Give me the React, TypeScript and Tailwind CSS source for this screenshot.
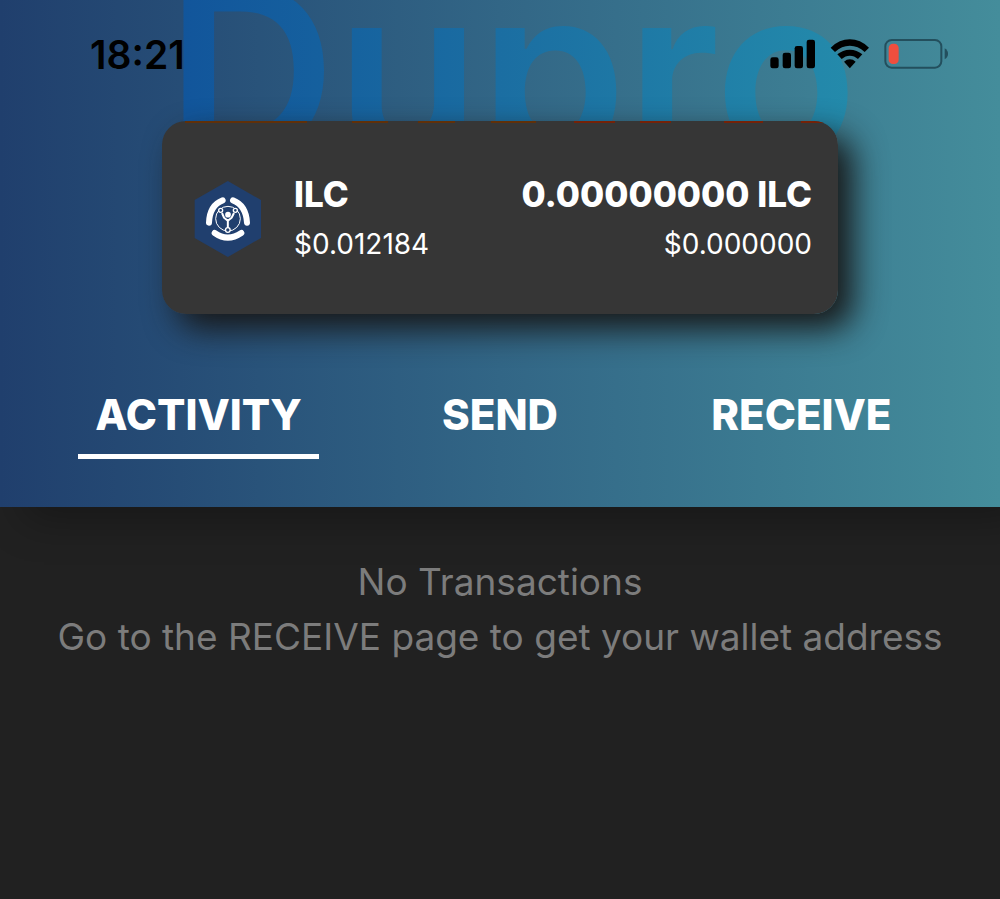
import { useState } from "react";

const tabs = ["ACTIVITY", "SEND", "RECEIVE"];

function SignalIcon() {
  return (
    <svg viewBox="60 58 138 90" className="h-[30px] w-[46px]" aria-hidden="true">
      <rect x="61" y="113" width="25" height="33" rx="7" />
      <rect x="98" y="99" width="25" height="47" rx="7" />
      <rect x="134" y="79" width="25" height="67" rx="7" />
      <rect x="170" y="60" width="25" height="86" rx="7" />
    </svg>
  );
}

function WifiIcon() {
  return (
    <svg viewBox="240 58 120 90" className="h-[30px] w-10" aria-hidden="true">
      <path d="M242 84Q268 59 299.500 59Q331 59 357 84L344 97Q324 78 299.500 78Q275 78 255 97Z" />
      <path d="M262 104Q278 90 299.500 90Q321 90 337 104L324 118Q313 108 299.500 108Q286 108 275 118Z" />
      <path d="M282 126Q290 119 299.500 119Q309 119 317 126L299.500 146Z" />
    </svg>
  );
}

function BatteryIcon() {
  return (
    <svg viewBox="404 58 195 90" className="h-[30px] w-[65px]" aria-hidden="true">
      <rect x="408" y="61" width="168" height="83" rx="19" fill="none" stroke="#234f5d" strokeWidth="6" />
      <rect x="418" y="72" width="30" height="61" rx="13" fill="#f04e3e" />
      <path d="M586 86Q596 92 596 102.500Q596 113 586 119Z" fill="#234f5d" />
    </svg>
  );
}

function CoinLogo() {
  return (
    <svg viewBox="43 48 204 228" className="h-[76px] w-[68px] shrink-0" role="img" aria-label="ILC logo">
      <path d="M144.500 48L244 105V219L144.500 276L45 219V105Z" fill="#203f6e" />
      <g fill="none" stroke="#fff">
        <g strokeWidth="18">
          <path d="M129 106Q90 121 88 173" strokeLinecap="round" />
          <path d="M160 106Q199 121 202 173" strokeLinecap="round" />
          <path d="M105 204Q144 232 185 204" strokeLinecap="round" />
        </g>
        <circle cx="145" cy="161" r="37" strokeWidth="3" />
        <path d="M127 144L133 158L144.500 167L156 158L163 144M144.500 162V188" strokeWidth="6" />
        <g fill="#203f6e" strokeWidth="4">
          <circle cx="123" cy="136" r="6" />
          <circle cx="167" cy="136" r="6" />
          <circle cx="144.500" cy="195" r="7" />
        </g>
      </g>
      <circle cx="145" cy="149" r="8.500" fill="#fff" />
    </svg>
  );
}

function CardEdge() {
  return (
    <svg viewBox="0 0 676 2" preserveAspectRatio="none" className="absolute inset-x-0 top-0 h-[2px] w-full" aria-hidden="true">
      <path d="M23 0H145V2H23ZM190 0H226V2H190ZM256 0H293V2H256ZM329 0H374V2H329Z" fill="#603009" />
      <path d="M412 0H453V2H412ZM478 0H509V2H478ZM562 0H601V2H562ZM639 0H676V2H639Z" fill="#742208" />
    </svg>
  );
}

export default function App() {
  const [active, setActive] = useState("ACTIVITY");

  return (
    <div className="min-h-screen overflow-hidden bg-[#212121] font-['Inter',sans-serif]">
      <header className="relative bg-linear-to-r from-[#203f6d] via-[#326686] to-[#448d9b] pb-12 shadow-[24px_12px_40px_rgba(0,0,0,0.3)]">
        <div className="absolute inset-x-0 top-0 flex h-[150px] justify-center overflow-hidden" aria-hidden="true">
          <span className="-mt-[29px] h-[200px] bg-linear-to-r from-[#11529a] via-[#1b6ea2] to-[#248bab] bg-clip-text pl-6 text-[235px] leading-[200px] font-semibold text-transparent">
            Dupro
          </span>
        </div>

        <div className="relative flex h-[121px] items-start justify-between pt-[34px] pr-[51px] pl-[90px] text-black">
          <time className="text-[39px] leading-[42px] font-semibold">18:21</time>
          <div className="flex items-center gap-[14px] pt-[5px]">
            <SignalIcon />
            <WifiIcon />
            <BatteryIcon />
          </div>
        </div>

        <section className="relative mx-auto w-[68%] max-w-[676px] rounded-[24px] shadow-[15px_15px_32px_#181818]">
          <div className="relative flex h-[193px] items-center gap-8 overflow-hidden rounded-[24px] bg-[#363636] pt-[2px] pr-[26px] pl-8 text-white">
            <CardEdge />
            <CoinLogo />
            <div className="flex flex-1 justify-between">
              <div>
                <h1 className="text-[35px] leading-[50px] font-extrabold">ILC</h1>
                <p className="text-[28px] leading-[50px] font-normal">$0.012184</p>
              </div>
              <div className="text-right">
                <p className="text-[35px] leading-[50px] font-extrabold">0.00000000 ILC</p>
                <p className="text-[28px] leading-[50px] font-normal">$0.000000</p>
              </div>
            </div>
          </div>
        </section>

        <nav className="relative mt-[74px] grid grid-cols-3 px-12">
          {tabs.map((tab) => (
            <button
              key={tab}
              type="button"
              onClick={() => setActive(tab)}
              className={
                tab === active
                  ? "mx-auto w-4/5 border-b-[5px] border-white pb-3 text-[42px] leading-[54px] font-extrabold text-white"
                  : "mx-auto w-4/5 border-b-[5px] border-transparent pb-3 text-[42px] leading-[54px] font-extrabold text-white"
              }
            >
              {tab}
            </button>
          ))}
        </nav>
      </header>

      <main className="relative px-4 pt-[47px] text-center text-[37px] leading-[55px] font-normal text-[#7c7c7c]">
        <p>No Transactions</p>
        <p>Go to the RECEIVE page to get your wallet address</p>
      </main>
    </div>
  );
}
